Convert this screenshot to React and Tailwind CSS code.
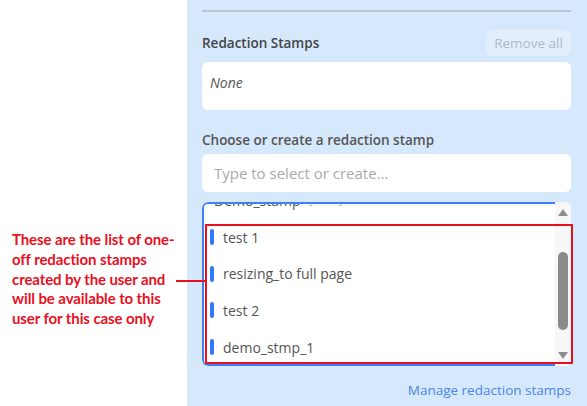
const stamps = ["test 1", "resizing_to full page", "test 2", "demo_stmp_1"];

const Stamp = ({ label }) => (
  <div className="h-[36.7px] shrink-0 flex items-center pl-[6px]">
    <span className="w-[4px] h-[16px] rounded-full bg-[#2f7bf5]" />
    <span className="ml-[9px] text-[14px] text-[#555]">{label}</span>
  </div>
);

const App = () => {
  return (
    <div
      className="relative w-[587px] h-[406px] flex bg-white overflow-hidden"
      style={{ fontFamily: '"Open Sans", "Noto Sans", sans-serif' }}
    >
      {/* note on the left */}
      <div className="w-[187px] shrink-0 pl-[12px] pt-[230px]">
        <p
          className="text-[15px] leading-[19.8px] font-bold text-[#e8101e] tracking-[-0.1px]"
          style={{ fontFamily: '"Lato", "Liberation Sans", sans-serif' }}
        >
          These are the list of one-
          <br />
          off redaction stamps
          <br />
          created by the user and
          <br />
          will be available to this
          <br />
          user for this case only
        </p>
      </div>

      {/* side panel */}
      <div className="flex-1 bg-[#d6e8fc] pl-[15px] pr-[16px] pt-[10px]">
        <div className="h-[2px] bg-[#b9c6d3]" />

        <div className="mt-[18px] flex items-center justify-between h-[26px]">
          <h3 className="text-[13.5px] font-semibold text-[#444]">Redaction Stamps</h3>
          <button className="h-[26px] w-[85px] rounded-md bg-[#e3eefc] text-[13.5px] text-[#aebacb]">
            Remove all
          </button>
        </div>

        <div className="mt-[6px] h-[48px] rounded-md bg-white px-[8px] pt-[8px]">
          <span className="italic text-[14px] text-[#555]">None</span>
        </div>

        <h3 className="mt-[20px] text-[13.5px] font-semibold text-[#555] leading-[20px]">
          Choose or create a redaction stamp
        </h3>

        <div className="mt-[4px] h-[38px] rounded-md bg-white flex items-center px-[12px]">
          <span className="text-[15px] text-[#aaa]">Type to select or create...</span>
        </div>

        <div className="mt-[10px] h-[164px] flex rounded-md bg-white overflow-hidden">
          <div className="flex-1 flex flex-col border-l-2 border-t-2 border-b-2 border-[#3b82f6] rounded-l-md overflow-hidden">
            <div className="-mt-[22px] flex flex-col">
              <div className="h-[36.7px] shrink-0 flex items-center pl-[10px]">
                <span className="text-[14px] text-[#555]">Demo_stamp</span>
                <span className="ml-[8px] text-[12px] text-[#bbb]">[DMS]</span>
              </div>
              {stamps.map((s) => (
                <Stamp key={s} label={s} />
              ))}
            </div>
          </div>
          <div className="w-[16px] shrink-0 bg-[#f7f7f7] flex flex-col items-center justify-between py-[6px]">
            <svg width="12" height="9" viewBox="0 0 12 9">
              <path d="M6 1L11 8H1z" fill="#8e8e8e" />
            </svg>
            <div className="w-[10px] h-[78px] rounded-full bg-[#8a8a8a] mt-[14px]" />
            <svg width="12" height="9" viewBox="0 0 12 9">
              <path d="M1 1h10L6 8z" fill="#8e8e8e" />
            </svg>
          </div>
        </div>

        <div className="mt-[11px] text-right">
          <a className="text-[13.5px] text-[#4a86e8]">Manage redaction stamps</a>
        </div>
      </div>

      {/* annotation overlay */}
      <div className="absolute left-[205px] top-[224px] w-[368px] h-[140px] border-2 border-[#e8101e] pointer-events-none" />
      <div className="absolute left-[176px] top-[280px] w-[29px] h-[2px] bg-[#e8101e]" />
    </div>
  );
};

export default App;
